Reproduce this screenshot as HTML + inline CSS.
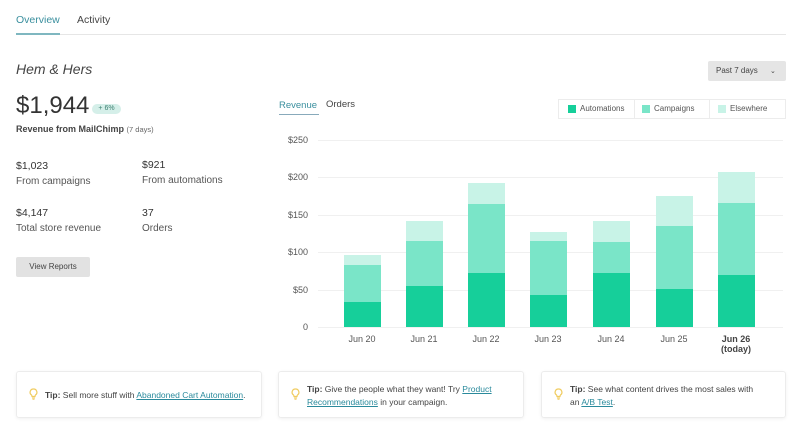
<!DOCTYPE html>
<html><head><meta charset="utf-8"><style>
*{margin:0;padding:0;box-sizing:border-box}
body{width:800px;height:427px;background:#fff;font-family:"Liberation Sans",sans-serif;color:#333;position:relative;overflow:hidden}
.a{position:absolute;white-space:nowrap}
.bar{position:absolute;width:37px}
.au{background:#16cf9a}.ca{background:#7ae5c8}.el{background:#c8f3e7}
.g{position:absolute;left:318px;width:465px;height:1px;background:#f0f0f0}
.yl{position:absolute;right:492px;font-size:9px;color:#555}
.xl{position:absolute;width:60px;text-align:center;font-size:9px;color:#555}
.tip{position:absolute;top:371px;height:47px;border:1px solid #ececec;border-radius:3px;box-shadow:0 1px 3px rgba(0,0,0,.06);font-size:8.5px;color:#444;line-height:13px}
.tip a{color:#2a8a9c;text-decoration:underline}
.bulb{position:absolute;left:12px;top:16px;width:9px;height:12px}
</style></head><body>
<div class="a" style="left:16px;top:14px;font-size:10.5px;color:#3a8f9e">Overview</div>
<div class="a" style="left:77px;top:14px;font-size:10.5px;color:#444">Activity</div>
<div class="a" style="left:16px;top:34px;width:770px;height:1px;background:#e6e6e6"></div>
<div class="a" style="left:16px;top:33px;width:44px;height:2px;background:#7fb7c0"></div>

<div class="a" style="left:16px;top:61px;font-size:14px;font-style:italic;color:#444">Hem &amp; Hers</div>
<div class="a" style="left:16px;top:92px;font-size:24px;color:#333">$1,944</div>
<div class="a" style="left:92px;top:104px;width:29px;height:10px;border-radius:5px;background:#d5efe9;font-size:7px;color:#3a7f70;text-align:center;line-height:10px">+ 6%</div>
<div class="a" style="left:16px;top:124px;font-size:9px;font-weight:bold;color:#444">Revenue from MailChimp <span style="font-weight:normal;font-size:7.5px;color:#666">(7 days)</span></div>
<div class="a" style="left:16px;top:160px;font-size:10.5px">$1,023</div>
<div class="a" style="left:16px;top:176px;font-size:10px;color:#555">From campaigns</div>
<div class="a" style="left:142px;top:159px;font-size:10.5px">$921</div>
<div class="a" style="left:142px;top:175px;font-size:10px;color:#555">From automations</div>
<div class="a" style="left:16px;top:207px;font-size:10.5px">$4,147</div>
<div class="a" style="left:16px;top:223px;font-size:10px;color:#555">Total store revenue</div>
<div class="a" style="left:142px;top:207px;font-size:10.5px">37</div>
<div class="a" style="left:142px;top:223px;font-size:10px;color:#555">Orders</div>
<div class="a" style="left:16px;top:257px;width:74px;height:20px;background:#e2e2e2;border-radius:2px;font-size:8px;color:#444;text-align:center;line-height:20px">View Reports</div>

<div class="a" style="left:708px;top:61px;width:78px;height:20px;background:#e5e5e5;border-radius:2px;font-size:8px;color:#444;line-height:20px;padding-left:8px">Past 7 days <span style="margin-left:10px;font-size:7px">&#8964;</span></div>

<div class="a" style="left:279px;top:100px;font-size:9.5px;color:#3a8f9e">Revenue</div>
<div class="a" style="left:279px;top:114px;width:40px;height:1px;background:#8ab"></div>
<div class="a" style="left:326px;top:99px;font-size:9.5px;color:#444">Orders</div>

<div class="a" style="left:558px;top:99px;width:228px;height:20px;border:1px solid #ececec;font-size:8px;color:#555;line-height:18px">
<span style="position:absolute;left:9px;top:5px;width:8px;height:8px" class="au"></span><span style="position:absolute;left:21px">Automations</span>
<span style="position:absolute;left:75px;top:0;width:1px;height:18px;background:#ececec"></span>
<span style="position:absolute;left:83px;top:5px;width:8px;height:8px" class="ca"></span><span style="position:absolute;left:95px">Campaigns</span>
<span style="position:absolute;left:150px;top:0;width:1px;height:18px;background:#ececec"></span>
<span style="position:absolute;left:159px;top:5px;width:8px;height:8px" class="el"></span><span style="position:absolute;left:171px">Elsewhere</span>
</div>

<div class="g" style="top:140px"></div><div class="yl" style="top:135px">$250</div>
<div class="g" style="top:177px"></div><div class="yl" style="top:172px">$200</div>
<div class="g" style="top:215px"></div><div class="yl" style="top:210px">$150</div>
<div class="g" style="top:252px"></div><div class="yl" style="top:247px">$100</div>
<div class="g" style="top:290px"></div><div class="yl" style="top:285px">$50</div>
<div class="g" style="top:327px"></div><div class="yl" style="top:322px">0</div>

<div class="bar el" style="left:344px;top:255px;height:10px"></div><div class="bar ca" style="left:344px;top:265px;height:37px"></div><div class="bar au" style="left:344px;top:302px;height:25px"></div>
<div class="bar el" style="left:406px;top:221px;height:20px"></div><div class="bar ca" style="left:406px;top:241px;height:45px"></div><div class="bar au" style="left:406px;top:286px;height:41px"></div>
<div class="bar el" style="left:468px;top:183px;height:21px"></div><div class="bar ca" style="left:468px;top:204px;height:69px"></div><div class="bar au" style="left:468px;top:273px;height:54px"></div>
<div class="bar el" style="left:530px;top:232px;height:9px"></div><div class="bar ca" style="left:530px;top:241px;height:54px"></div><div class="bar au" style="left:530px;top:295px;height:32px"></div>
<div class="bar el" style="left:593px;top:221px;height:21px"></div><div class="bar ca" style="left:593px;top:242px;height:31px"></div><div class="bar au" style="left:593px;top:273px;height:54px"></div>
<div class="bar el" style="left:656px;top:196px;height:30px"></div><div class="bar ca" style="left:656px;top:226px;height:63px"></div><div class="bar au" style="left:656px;top:289px;height:38px"></div>
<div class="bar el" style="left:718px;top:172px;height:31px"></div><div class="bar ca" style="left:718px;top:203px;height:72px"></div><div class="bar au" style="left:718px;top:275px;height:52px"></div>

<div class="xl" style="left:332px;top:334px">Jun 20</div>
<div class="xl" style="left:394px;top:334px">Jun 21</div>
<div class="xl" style="left:456px;top:334px">Jun 22</div>
<div class="xl" style="left:518px;top:334px">Jun 23</div>
<div class="xl" style="left:581px;top:334px">Jun 24</div>
<div class="xl" style="left:644px;top:334px">Jun 25</div>
<div class="xl" style="left:706px;top:334px;font-weight:bold;color:#444">Jun 26<br>(today)</div>

<div class="tip" style="left:16px;width:246px"><svg class="bulb" viewBox="0 0 9 12"><path d="M4.5 1a3.3 3.3 0 0 0-2 6c.4.4.5.8.5 1.5h3c0-.7.1-1.1.5-1.5a3.3 3.3 0 0 0-2-6z" fill="none" stroke="#f0cc60" stroke-width="1.2"/><path d="M3 10h3M3.5 11.3h2" stroke="#f0cc60" stroke-width="1"/></svg><div style="position:absolute;left:28px;top:17px"><b>Tip:</b> Sell more stuff with <a>Abandoned Cart Automation</a>.</div></div>
<div class="tip" style="left:278px;width:246px"><svg class="bulb" viewBox="0 0 9 12"><path d="M4.5 1a3.3 3.3 0 0 0-2 6c.4.4.5.8.5 1.5h3c0-.7.1-1.1.5-1.5a3.3 3.3 0 0 0-2-6z" fill="none" stroke="#f0cc60" stroke-width="1.2"/><path d="M3 10h3M3.5 11.3h2" stroke="#f0cc60" stroke-width="1"/></svg><div style="position:absolute;left:28px;top:11px"><b>Tip:</b> Give the people what they want! Try <a>Product</a><br><a>Recommendations</a> in your campaign.</div></div>
<div class="tip" style="left:541px;width:245px"><svg class="bulb" viewBox="0 0 9 12"><path d="M4.5 1a3.3 3.3 0 0 0-2 6c.4.4.5.8.5 1.5h3c0-.7.1-1.1.5-1.5a3.3 3.3 0 0 0-2-6z" fill="none" stroke="#f0cc60" stroke-width="1.2"/><path d="M3 10h3M3.5 11.3h2" stroke="#f0cc60" stroke-width="1"/></svg><div style="position:absolute;left:28px;top:11px"><b>Tip:</b> See what content drives the most sales with<br>an <a>A/B Test</a>.</div></div>
</body></html>
